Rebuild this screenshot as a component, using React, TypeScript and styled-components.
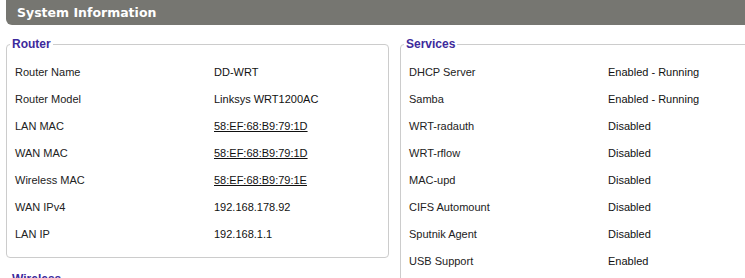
import React from 'react';
import styled, {createGlobalStyle} from 'styled-components';

const GlobalStyle = createGlobalStyle`
  html, body {
    margin: 0;
    padding: 0;
    background: #fff;
    overflow: hidden;
  }
  body {
    font-family: "Liberation Sans", Arial, sans-serif;
    font-size: 11px;
    color: #222;
  }
`;

const Page = styled.div`
  width: 745px;
  height: 278px;
  overflow: hidden;
  padding-left: 6px;
  box-sizing: border-box;
`;

const Header = styled.h2`
  margin: 0;
  height: 25px;
  width: 800px;
  background: #767671;
  border-radius: 0 0 0 6px;
  color: #fff;
  font-family: "DejaVu Sans", Verdana, sans-serif;
  font-weight: bold;
  font-size: 12.5px;
  line-height: 25px;
  padding-left: 11px;
  box-sizing: border-box;
`;

const Columns = styled.div`
  display: grid;
  grid-template-columns: 383px 383px;
  column-gap: 11px;
  margin-top: 12px;
  align-items: start;
`;

const Stack = styled.div`
  display: flex;
  flex-direction: column;
  gap: 14px;
`;

const Fieldset = styled.fieldset`
  margin: 0;
  padding: 7px 8px 10px;
  border: 1px solid #ccc;
  border-radius: 4px;
  min-width: 0;
`;

const Legend = styled.legend`
  padding: 0 2px;
  margin-left: -5px;
  font-weight: bold;
  font-size: 12px;
  color: #3d2a9c;
`;

const Row = styled.div`
  display: grid;
  grid-template-columns: 199px 1fr;
  height: 27px;
  align-items: center;
  white-space: nowrap;
`;

const Value = styled.span<{ $link?: boolean }>`
  color: #111;
  text-decoration: ${p => (p.$link ? 'underline' : 'none')};
`;

type Item = [string, string, boolean?];

const router: Item[] = [
    ['Router Name', 'DD-WRT'],
    ['Router Model', 'Linksys WRT1200AC'],
    ['LAN MAC', '58:EF:68:B9:79:1D', true],
    ['WAN MAC', '58:EF:68:B9:79:1D', true],
    ['Wireless MAC', '58:EF:68:B9:79:1E', true],
    ['WAN IPv4', '192.168.178.92'],
    ['LAN IP', '192.168.1.1'],
];

const services: Item[] = [
    ['DHCP Server', 'Enabled - Running'],
    ['Samba', 'Enabled - Running'],
    ['WRT-radauth', 'Disabled'],
    ['WRT-rflow', 'Disabled'],
    ['MAC-upd', 'Disabled'],
    ['CIFS Automount', 'Disabled'],
    ['Sputnik Agent', 'Disabled'],
    ['USB Support', 'Enabled'],
    ['Milkfish', 'Disabled'],
];

const Section = ({title, items}: { title: string; items: Item[] }) => (
    <Fieldset>
        <Legend>{title}</Legend>
        {items.map(([label, value, link]) => (
            <Row key={label}>
                <span>{label}</span>
                <Value $link={link}>{value}</Value>
            </Row>
        ))}
    </Fieldset>
);

export default function App() {
    return (
        <Page>
            <GlobalStyle/>
            <Header>System Information</Header>
            <Columns>
                <Stack>
                    <Section title="Router" items={router}/>
                    <Section title="Wireless" items={[['Radio', 'Radio is On']]}/>
                </Stack>
                <Stack>
                    <Section title="Services" items={services}/>
                </Stack>
            </Columns>
        </Page>
    );
}
